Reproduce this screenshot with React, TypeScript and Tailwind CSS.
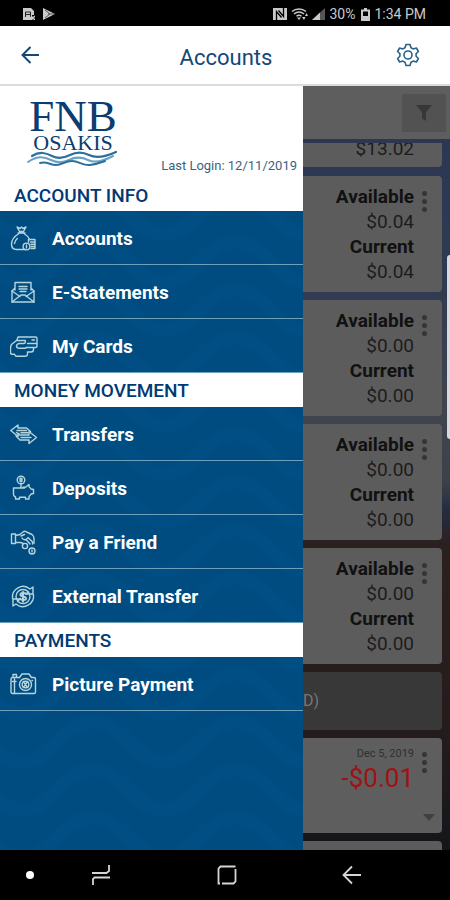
import React from "react";

type IconProps = { children: React.ReactNode };

function LineIcon({ children }: IconProps) {
  return (
    <svg
      viewBox="0 0 28 28"
      className="h-7 w-7 shrink-0 text-[#b5d5dd]"
      fill="none"
      stroke="currentColor"
      strokeWidth="1.4"
      strokeLinecap="round"
      strokeLinejoin="round"
      aria-hidden="true"
    >
      {children}
    </svg>
  );
}

const icons = {
  bag: (
    <LineIcon>
      <path d="M7 2l3 1.500 1.500-1.500 1.500 1.500 3-1.500-2.500 4.500h-4zM8 8h7" />
      <path d="M9 8.500c-4 2.500-7.500 6.500-7.500 10.500 0 3.500 2 5.500 5 5.500h8.500M14 8.500c2.500 1.500 4.500 3.500 5.500 6" />
      <path d="M4.500 18.500c.3-2 1.200-3.600 2.800-5" />
      <circle cx="16.500" cy="21.500" r="3.400" />
      <path d="M16.500 20v3" />
      <path d="M18.500 14.500h6.500v9h-4M18.500 14.500v2.500M20.500 17h4.500M21 19.300h4M21 21.500h4" />
    </LineIcon>
  ),
  mail: (
    <LineIcon>
      <path d="M5 11V3.500h16V11M5 9l-3 3v11h22V12l-3-3" />
      <path d="M2 12l8 5.500M24 12l-8 5.500M2 23l9-7h4l9 7" />
      <path d="M9 7.500h8M9 10h8M10 12.500h6" />
    </LineIcon>
  ),
  cards: (
    <LineIcon>
      <path d="M7 7l1-3h17.500a1.500 1.500 0 0 1 1.500 1.500V13a1.500 1.500 0 0 1-1.500 1.500H16" />
      <path d="M15 7.500H6.500L2 11c-1 1-1.500 2.300-1.500 4v4.500c0 1 .8 1.800 2 1.800h2l1.500 2h9c1.200 0 2.500-.8 2.500-2.300V19h3.500c1.500 0 2.500-1 2.500-2.500V15" />
      <path d="M15 7.500c1 1.500 0 3-1.500 3h-4c-1.500 0-3 1.200-3 2.500s1.300 2.200 3 2.200h6M17.500 10.500h9M22 7h2.500" />
    </LineIcon>
  ),
  transfer: (
    <LineIcon>
      <path d="M.8 9.500L8 4v3h8.500l4 3.500M.8 9.500L8 15.500v-3h1" />
      <path d="M26.500 16.500L19 10.500v3.500H9.500L6.500 11.500M26.500 16.500L19 22.500V19h-9l-4-4" />
      <path d="M7 9.500h9.500M11 11.800h7M11 16.500h10" />
    </LineIcon>
  ),
  piggy: (
    <LineIcon>
      <circle cx="11" cy="5" r="3.800" />
      <path d="M11 3v4M9.700 4h2.600M9.700 6h2.600M11 9v3.500" />
      <path d="M8.500 13H3.500v6.500c0 1 1 2 2 2.500v2h4v-1.700h6V24H19v-2.500c1-.8 1.500-1.500 2-2.500l2.500-.5v-4L21 14c-.5-1-1-1.500-2-2.200V9.500l-3.500 2.700h-2.500M7 13h7.500" />
    </LineIcon>
  ),
  pay: (
    <LineIcon>
      <path d="M1.500 5h4v9.500h-4zM5.500 6.500l4.500-1 3-2.500c1-.8 2.500-.8 3.500 0L22 5.500c1.500 1 2 2.500 2 4v5M5.500 13.500h5l3 1" />
      <path d="M12 9c1.500 2.500 4.500 2.300 6-.5l4.500 4.500v2M16.500 11l3.500 4M11 7l3.500-1.500" />
      <circle cx="15" cy="17" r="2.600" />
      <circle cx="22" cy="22" r="3" />
      <path d="M22 21v2" />
    </LineIcon>
  ),
  dollar: (
    <LineIcon>
      <circle cx="13" cy="13.500" r="7" />
      <path d="M2.500 15.500A10.700 10.700 0 0 1 20 6l3-2v7h-7l2.300-2.300M23.500 11.500A10.700 10.700 0 0 1 6 21l-3 2v-7h7L7.500 18.500" />
      <path strokeWidth="2" d="M16 11c-1-1.300-5.500-1.500-5.500.7 0 2.300 5.500 1.300 5.500 3.700 0 2-4.500 2-6 .3M13 9v9.500" />
    </LineIcon>
  ),
  camera: (
    <LineIcon>
      <path d="M8 6.500h1.500l2.500-3.500h7l2.500 3.500h2.500a1.500 1.500 0 0 1 1.500 1.500v13a1.500 1.500 0 0 1-1.500 1.500H2.500A1.500 1.500 0 0 1 1 21V8a1.500 1.500 0 0 1 1.500-1.500H8zM3 6V3.500h3.500V6M2.500 10.500H6M4.500 8v14" />
      <circle cx="15.500" cy="13.500" r="6" />
      <circle cx="15.500" cy="13.500" r="3.300" />
      <path d="M13.500 10.500l4 6M17.500 10.500l-4 6M22 9.500h.5" />
    </LineIcon>
  ),
};

const sections = [
  {
    title: "ACCOUNT INFO",
    items: [
      { label: "Accounts", icon: icons.bag },
      { label: "E-Statements", icon: icons.mail },
      { label: "My Cards", icon: icons.cards },
    ],
  },
  {
    title: "MONEY MOVEMENT",
    items: [
      { label: "Transfers", icon: icons.transfer },
      { label: "Deposits", icon: icons.piggy },
      { label: "Pay a Friend", icon: icons.pay },
      { label: "External Transfer", icon: icons.dollar },
    ],
  },
  { title: "PAYMENTS", items: [{ label: "Picture Payment", icon: icons.camera }] },
];

const balances = ["$0.04", "$0.00", "$0.00", "$0.00"];

function StatusBar() {
  return (
    <div className="flex h-[26px] items-center justify-between bg-black pt-0.5 pr-6 pl-[23px] text-[#c9c9c9]">
      <div className="flex items-center gap-2">
        <svg viewBox="0 0 12 12" className="h-3 w-3" aria-hidden="true">
          <path fill="currentColor" d="M0 0h8l3 3v4H9v5H0z" />
          <path stroke="#222" fill="none" d="M2.500 9V4h5v5M2.500 6.500h5" />
          <path stroke="currentColor" strokeWidth="1.500" d="M8 8l4 4M12 8l-4 4" />
        </svg>
        <svg viewBox="0 0 12 12" className="h-3 w-3" aria-hidden="true">
          <path fill="currentColor" d="M0 0l12 6-12 6z" />
          <path stroke="#555" fill="none" d="M2 2l5 4-5 4M5 6h6" />
        </svg>
      </div>
      <div className="flex items-center gap-1 text-sm">
        <svg viewBox="0 0 14 12" className="h-3 w-3.5" aria-hidden="true">
          <path fill="currentColor" d="M0 0h14v12H0z" />
          <path stroke="#000" strokeWidth="1.300" fill="none" d="M3.500 12V3.500l5 6M10.500 0v8.500l-5-6" />
        </svg>
        <svg viewBox="0 0 17 12" className="h-3 w-[17px]" fill="none" stroke="currentColor" strokeWidth="1.500" aria-hidden="true">
          <path d="M1 3.500c4-3.500 10-3.500 14 0M3 6c3-2.500 7-2.500 10 0M5.500 8.300c1.500-1.300 3.500-1.300 5 0" />
          <path fill="currentColor" stroke="none" d="M6 9.500h4L8 12zM11 9l2 3 1.500-3zM14 8l1.500-3L17 8z" />
        </svg>
        <svg viewBox="0 0 13 12" className="h-3 w-[13px]" aria-hidden="true">
          <path fill="#555" d="M0 12L13 0v12z" />
          <path fill="currentColor" d="M0 12l8-7.400V12z" />
        </svg>
        <span>30%</span>
        <svg viewBox="0 0 9 13" className="ml-0.5 h-[13px] w-[9px]" aria-hidden="true">
          <path fill="currentColor" fillRule="evenodd" d="M3 0h3v1.500h3V13H0V1.500h3zM2 3.500V8h5V3.500z" />
        </svg>
        <span className="whitespace-nowrap">1:34 PM</span>
      </div>
    </div>
  );
}

function Dots() {
  return (
    <button aria-label="More options" className="flex w-2 flex-col items-center gap-[3px]">
      <span className="h-[5px] w-[5px] rounded-full bg-[#353535]" />
      <span className="h-[5px] w-[5px] rounded-full bg-[#353535]" />
      <span className="h-[5px] w-[5px] rounded-full bg-[#353535]" />
    </button>
  );
}

function AccountsPage() {
  return (
    <div className="flex flex-1 flex-col overflow-hidden">
      <div className="flex h-[53px] shrink-0 items-center justify-end bg-[#5e5e5e] pr-1">
        <button aria-label="Filter" className="flex h-[38px] w-11 items-center justify-center bg-[#525252]">
          <svg viewBox="0 0 16 16" className="h-4 w-4" aria-hidden="true">
            <path fill="#383838" d="M0 0h16l-6 7.500V16l-4-2.500v-6z" />
          </svg>
        </button>
      </div>
      <div className="flex flex-1 flex-col gap-2 bg-[linear-gradient(180deg,#2c3752_0%,#303a52_20%,#40454e_38%,#3d4249_48%,#262d40_52%,#2a2020_57%,#241c1c_85%,#15151a_100%)] pt-1 pr-2">
        <div className="mb-px flex h-6 shrink-0 items-end justify-end overflow-hidden rounded-b bg-[#5c5c5c] pr-7 pb-1.5 text-[19px] leading-[25px] text-[#1c1c1c]">
          $13.02
        </div>
        {balances.map((amount, i) => (
          <div key={i} className="flex shrink-0 justify-end gap-1.5 rounded-sm bg-[#5c5c5c] py-2 pr-3.5 text-right text-[19px] leading-[25px] text-[#1c1c1c]">
            <dl>
              <dt className="font-bold text-[#111]">Available</dt>
              <dd>{amount}</dd>
              <dt className="font-bold text-[#111]">Current</dt>
              <dd>{amount}</dd>
            </dl>
            <div className="pt-[7px]">
              <Dots />
            </div>
          </div>
        ))}
        <div className="flex h-[58px] shrink-0 items-center justify-end rounded-sm bg-[#383838] pr-[123px] text-base text-[#777]">
          (D)
        </div>
        <div className="flex h-[95px] shrink-0 justify-end gap-1.5 rounded-sm bg-[#5e5e5e] pt-2 pr-3.5">
          <div className="text-right">
            <p className="text-[11px] leading-4 text-[#303030]">Dec 5, 2019</p>
            <p className="text-[26px] leading-8 text-[#a01212]">-$0.01</p>
          </div>
          <div className="flex w-2 flex-col items-center justify-between pt-1.5 pb-3">
            <Dots />
            <svg viewBox="0 0 12 7" className="mr-[-9px] h-[7px] w-3 shrink-0" aria-hidden="true">
              <path fill="#404040" d="M0 0h12L6 7z" />
            </svg>
          </div>
        </div>
        <div className="min-h-0 flex-1 rounded-t-sm bg-[#5c5c5c]" />
      </div>
    </div>
  );
}

function Logo() {
  return (
    <svg viewBox="0 0 94 80" className="h-20 w-[94px]" role="img" aria-label="FNB Osakis">
      <g fill="#0b3d70" fontFamily="'Liberation Serif', serif" textAnchor="middle">
        <text x="47" y="43" fontSize="45">FNB</text>
        <text x="47" y="62" fontSize="22">OSAKIS</text>
      </g>
      <g fill="none" strokeLinecap="round">
        <path stroke="#2c6f9f" strokeWidth="2.200" d="M6 68c8-5 14-3 20 0s12 2 18-1 13-3 19 0 14 3 27-3" />
        <path stroke="#6aa2c4" strokeWidth="2" d="M2 74c10-7 17-5 23-2s12 3 18 0 13-3 19 0 14 2 25-4" />
        <path stroke="#2c6f9f" strokeWidth="2" d="M14 75c7-2 10 2 16 2s9-4 16-4 11 5 18 4 9-2 15-4" />
      </g>
    </svg>
  );
}

function Drawer() {
  return (
    <nav aria-label="Main menu" className="absolute inset-y-0 left-0 flex w-[303px] flex-col overflow-hidden bg-[#004b80]">
      <svg className="absolute inset-0 h-full w-full" aria-hidden="true">
        <defs>
          <pattern id="waves" width="142" height="48" patternUnits="userSpaceOnUse" x="22" y="8">
            <g fill="none" stroke="#005287" strokeWidth="14" opacity="0.5">
              <path d="M-71 4C-40 4-30 44 0 44S40 4 71 4 112 44 142 44 182 4 213 4" />
              <path d="M-71 52C-40 52-30 92 0 92S40 52 71 52 112 92 142 92 182 52 213 52" />
              <path d="M-71-44C-40-44-30-4 0-4S40-44 71-44 112-4 142-4 182-44 213-44" />
            </g>
          </pattern>
        </defs>
        <rect width="100%" height="100%" fill="url(#waves)" />
      </svg>
      <div className="relative flex h-[93px] shrink-0 items-end justify-between bg-white pr-1.5 pb-[5px] pl-[26px]">
        <div className="pb-1.5">
          <Logo />
        </div>
        <p className="text-[13px] leading-4 whitespace-nowrap text-[#3d6281]">Last Login: 12/11/2019</p>
      </div>
      {sections.map((section, i) => (
        <section key={section.title} className="relative">
          <h2 className={`bg-white pl-3.5 text-[19px] font-medium text-[#003a73] ${i === 0 ? "h-8 leading-[34px]" : "h-[34px] leading-9"}`}>
            {section.title}
          </h2>
          <ul>
            {section.items.map((item) => (
              <li key={item.label}>
                <a href="#" className="flex h-[54px] items-center gap-3.5 border-b border-[#6c9fba] pt-[3px] pl-2.5 text-[19px] font-bold text-white">
                  {item.icon}
                  {item.label}
                </a>
              </li>
            ))}
          </ul>
        </section>
      ))}
    </nav>
  );
}

function NavBar() {
  return (
    <div className="flex h-[50px] items-center gap-[57px] bg-black pr-[88px] pl-[26px] text-[#d5d5d5]">
      <span className="h-2 w-2 rounded-full bg-white" />
      <div className="flex flex-1 items-center justify-between">
        <button aria-label="Recent apps">
          <svg viewBox="0 0 20 20" className="h-5 w-5" fill="none" stroke="currentColor" strokeWidth="1.800" aria-hidden="true">
            <path d="M1 8h14.500l2.500-2V0M19 12.500H3.500L2 14v6" />
          </svg>
        </button>
        <button aria-label="Home">
          <svg viewBox="0 0 20 20" className="h-5 w-5" fill="none" stroke="currentColor" strokeWidth="1.800" aria-hidden="true">
            <path d="M18.500 1.500H3.500L1.500 3.500v15h1.500M5 18.500h11.500l2-2V4" />
          </svg>
        </button>
        <button aria-label="Back">
          <svg viewBox="0 0 20 20" className="h-5 w-5" fill="none" stroke="currentColor" strokeWidth="1.800" aria-hidden="true">
            <path d="M19 10H2M10 1.500L1.500 10l8.500 8.500" />
          </svg>
        </button>
      </div>
    </div>
  );
}

export default function App() {
  return (
    <div className="flex min-h-screen flex-col bg-black font-['Roboto',sans-serif]">
      <StatusBar />
      <header className="grid h-[60px] grid-cols-[1fr_auto_1fr] items-center border-b-2 border-[#dcdcdc] bg-white pr-[30px] pl-5 text-[#14477a]">
        <button aria-label="Back" className="justify-self-start">
          <svg viewBox="0 0 20 20" className="h-5 w-5" fill="none" stroke="currentColor" strokeWidth="2" aria-hidden="true">
            <path d="M19 10H3M10.500 2L2.500 10l8 8" />
          </svg>
        </button>
        <h1 className="pt-1 pl-3 text-[22px]">Accounts</h1>
        <button aria-label="Settings" className="justify-self-end">
          <svg viewBox="0 0 24 24" className="h-6 w-6" fill="none" stroke="#2b6285" strokeWidth="1.600" strokeLinejoin="round" aria-hidden="true">
            <path d="M10 1.500h4l1 3.200 2.200 1.200 3.200-.9 2 3.500-2.300 2.300v2.400l2.300 2.300-2 3.500-3.200-.9-2.200 1.200-1 3.200h-4l-1-3.200-2.200-1.200-3.200.9-2-3.500 2.300-2.300v-2.400L1.600 8.500l2-3.500 3.200.9L9 4.700z" />
            <circle cx="12" cy="12" r="4" />
          </svg>
        </button>
      </header>
      <main className="relative flex flex-1 flex-col">
        <AccountsPage />
        <Drawer />
        <span className="absolute top-[169px] right-0 h-[184px] w-[3px] rounded-l-sm bg-[#d9d9d9]" />
      </main>
      <NavBar />
    </div>
  );
}
